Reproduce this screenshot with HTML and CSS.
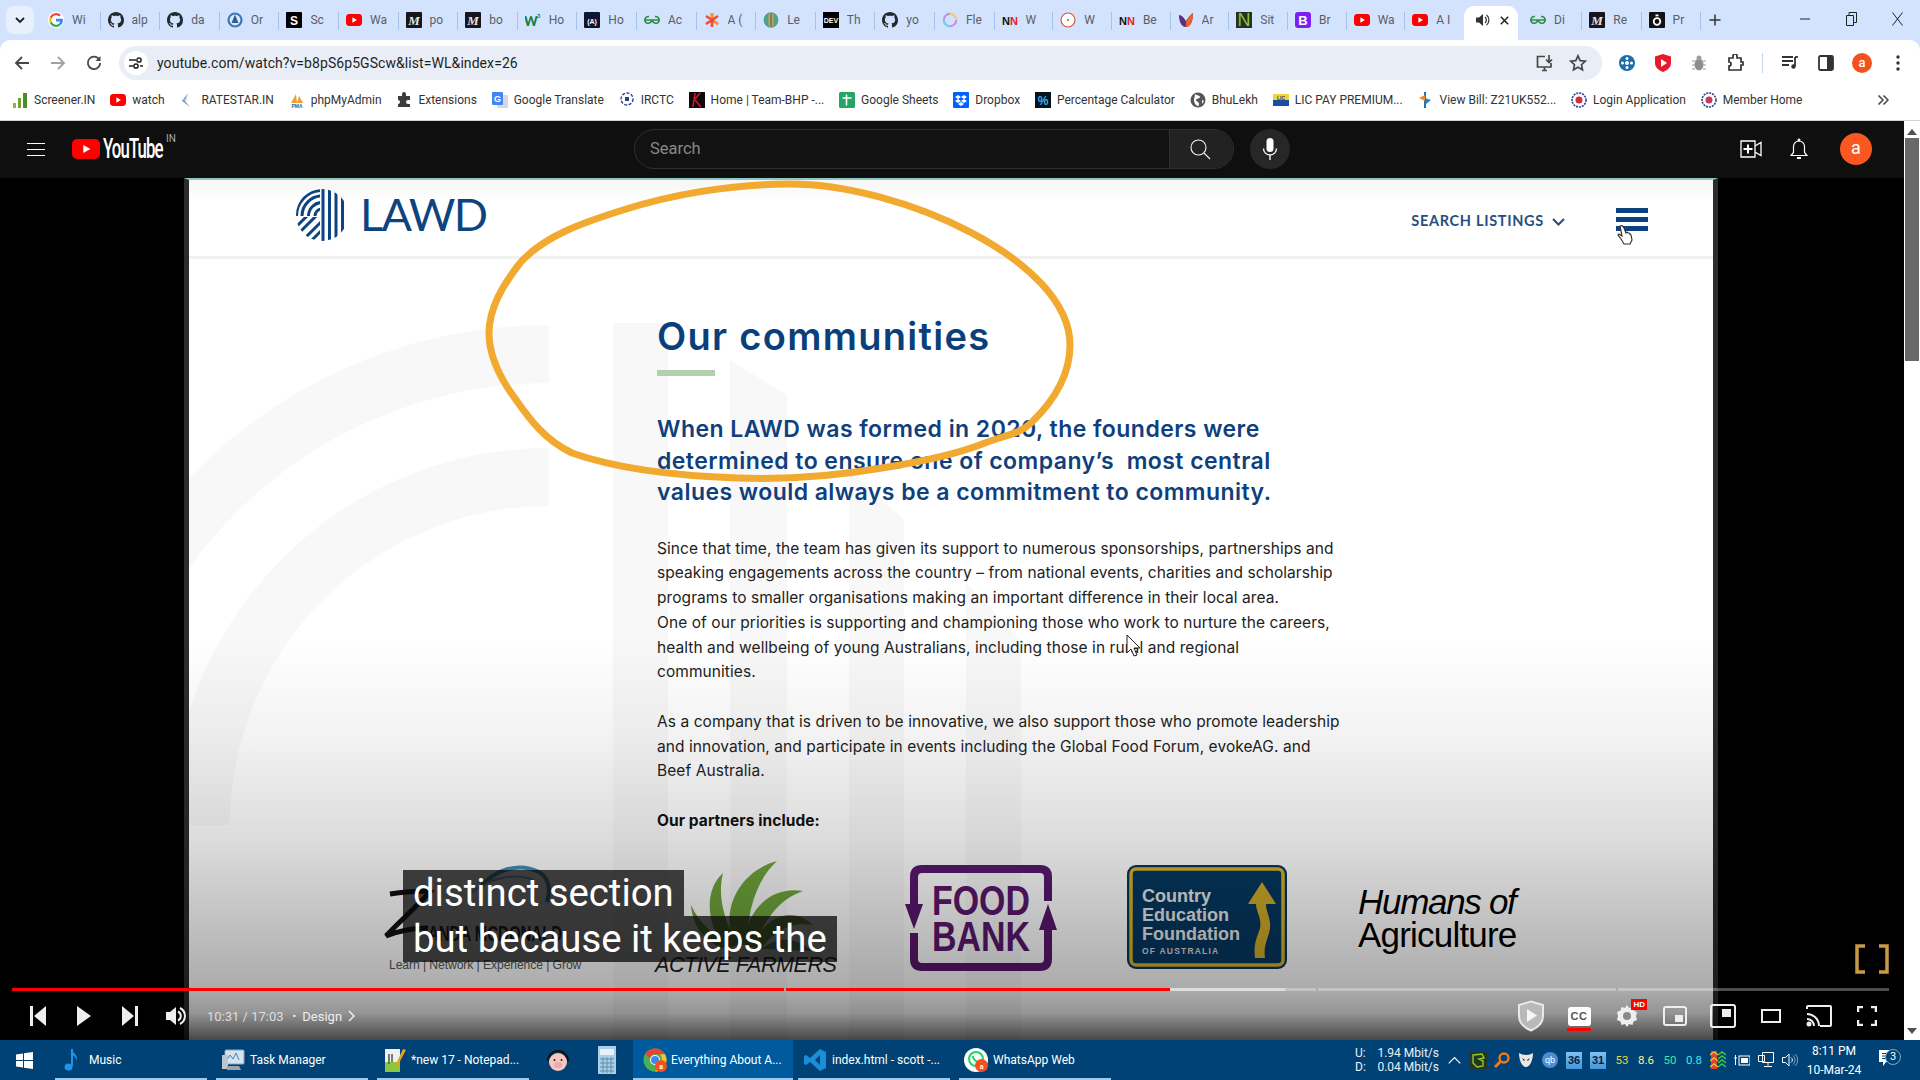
FILE: index.html
```html
<!DOCTYPE html>
<html lang="en">
<head>
<meta charset="utf-8">
<title>YouTube</title>
<link rel="stylesheet" href="styles.css">
</head>
<body>
<svg class="defs" width="0" height="0" aria-hidden="true">
  <symbol id="i-g" viewBox="0 0 16 16"><circle cx="8" cy="8" r="8" fill="#fff"/><path d="M8 3.2a4.8 4.8 0 0 1 3.3 1.3l1.6-1.6A7 7 0 0 0 1.8 5l1.9 1.4A4.6 4.6 0 0 1 8 3.2z" fill="#ea4335"/><path d="M3.7 9.6 1.8 11a7 7 0 0 0 11 2.1l-1.8-1.4A4.6 4.6 0 0 1 3.7 9.6z" fill="#34a853"/><path d="M1.8 5a7 7 0 0 0 0 6l1.9-1.4a4.6 4.6 0 0 1 0-3.2z" fill="#fbbc05"/><path d="M14.8 6.8H8v2.6h3.9a3.4 3.4 0 0 1-.9 2.3l1.8 1.4a7 7 0 0 0 2-6.3z" fill="#4285f4"/></symbol>
  <symbol id="i-gh" viewBox="0 0 16 16"><path fill="#24292f" d="M8 0C3.58 0 0 3.58 0 8c0 3.54 2.29 6.53 5.47 7.59.4.07.55-.17.55-.38 0-.19-.01-.82-.01-1.49-2.01.37-2.53-.49-2.69-.94-.09-.23-.48-.94-.82-1.13-.28-.15-.68-.52-.01-.53.63-.01 1.08.58 1.23.82.72 1.21 1.87.87 2.33.66.07-.52.28-.87.51-1.07-1.78-.2-3.64-.89-3.64-3.95 0-.87.31-1.59.82-2.15-.08-.2-.36-1.02.08-2.12 0 0 .67-.21 2.2.82.64-.18 1.32-.27 2-.27.68 0 1.36.09 2 .27 1.53-1.04 2.2-.82 2.2-.82.44 1.1.16 1.92.08 2.12.51.56.82 1.27.82 2.15 0 3.07-1.87 3.75-3.65 3.95.29.25.54.73.54 1.48 0 1.07-.01 1.93-.01 2.2 0 .21.15.46.55.38A8.013 8.013 0 0016 8c0-4.42-3.58-8-8-8z"/></symbol>
  <symbol id="i-yt" viewBox="0 0 16 16"><rect y="2" width="16" height="12" rx="3.4" fill="#f00"/><path d="M6.4 5.3 10.9 8l-4.5 2.7z" fill="#fff"/></symbol>
  <symbol id="i-m" viewBox="0 0 16 16"><rect width="16" height="16" rx="1" fill="#15151b"/><text x="8" y="12.5" text-anchor="middle" class="sv-m">M</text></symbol>
  <symbol id="i-gfg" viewBox="0 0 16 16"><path d="M1 8h14M5 4.6a3.4 3.4 0 1 0 2.6 3.4M11 4.6A3.4 3.4 0 1 1 8.4 8" fill="none" stroke="#2f8d46" stroke-width="1.6"/></symbol>
  <symbol id="i-nn" viewBox="0 0 16 16"><text x="0" y="13" class="sv-nn">N</text><text x="8" y="13" class="sv-nn sv-red">N</text></symbol>
  <symbol id="i-avatar" viewBox="0 0 20 20"><circle cx="10" cy="10" r="10" fill="#f4511e"/><text x="10" y="14" text-anchor="middle" class="sv-a">a</text></symbol>
</svg>

<div class="tabstrip">
  <div class="tabsearch"><svg width="10" height="7" viewBox="0 0 10 7"><path d="M1 1l4 4 4-4" fill="none" stroke="#1f1f1f" stroke-width="1.8"/></svg></div>
  <div class="tab"><svg class="fav"><use href="#i-g"/></svg><span>Wi</span></div>
  <div class="tab"><svg class="fav"><use href="#i-gh"/></svg><span>alp</span></div>
  <div class="tab"><svg class="fav"><use href="#i-gh"/></svg><span>da</span></div>
  <div class="tab"><svg class="fav" viewBox="0 0 16 16"><circle cx="8" cy="8" r="7.6" fill="#3d78b8"/><circle cx="8" cy="8" r="5.4" fill="#dfeaf6"/><path d="M8 2.5 11.5 11h-7z" fill="#2a5e9c"/></svg><span>Or</span></div>
  <div class="tab"><svg class="fav" viewBox="0 0 16 16"><rect width="16" height="16" rx="1" fill="#000"/><text x="8" y="12.6" text-anchor="middle" class="sv-s">S</text></svg><span>Sc</span></div>
  <div class="tab"><svg class="fav"><use href="#i-yt"/></svg><span>Wa</span></div>
  <div class="tab"><svg class="fav"><use href="#i-m"/></svg><span>po</span></div>
  <div class="tab"><svg class="fav"><use href="#i-m"/></svg><span>bo</span></div>
  <div class="tab"><svg class="fav" viewBox="0 0 16 16"><text x="-1" y="13.5" class="sv-w">W</text><text x="12" y="6" class="sv-w3">3</text></svg><span>Ho</span></div>
  <div class="tab"><svg class="fav" viewBox="0 0 16 16"><rect width="16" height="16" rx="1" fill="#0f1632"/><text x="8" y="12" text-anchor="middle" class="sv-ah">(A)</text></svg><span>Ho</span></div>
  <div class="tab"><svg class="fav"><use href="#i-gfg"/></svg><span>Ac</span></div>
  <div class="tab"><svg class="fav" viewBox="0 0 16 16"><path d="M8 1v14M2 4l12 8M14 4 2 12" stroke="#ef4c38" stroke-width="2.6"/><path d="M8 1v5M14 12l-4-3" stroke="#f59b1c" stroke-width="2.6"/></svg><span>A (</span></div>
  <div class="tab"><svg class="fav" viewBox="0 0 16 16"><ellipse cx="8" cy="8" rx="7.4" ry="7.8" fill="#4fa18a"/><rect x="5.4" y="1" width="5.2" height="14" rx="2.6" fill="#c3a05b"/><path d="M8 1v14" stroke="#3c5f55"/></svg><span>Le</span></div>
  <div class="tab"><svg class="fav" viewBox="0 0 16 16"><rect width="16" height="16" fill="#000"/><text x="8" y="11" text-anchor="middle" class="sv-dev">DEV</text></svg><span>Th</span></div>
  <div class="tab"><svg class="fav"><use href="#i-gh"/></svg><span>yo</span></div>
  <div class="tab"><svg class="fav" viewBox="0 0 16 16"><circle cx="8" cy="8" r="6.2" fill="none" stroke="#c58af0" stroke-width="2"/><path d="M8 1.8a6.2 6.2 0 0 1 6.2 6.2" fill="none" stroke="#f7d65c" stroke-width="2"/><path d="M1.8 8A6.2 6.2 0 0 0 8 14.2" fill="none" stroke="#6fd0ea" stroke-width="2"/></svg><span>Fle</span></div>
  <div class="tab"><svg class="fav"><use href="#i-nn"/></svg><span>W</span></div>
  <div class="tab"><svg class="fav" viewBox="0 0 16 16"><circle cx="8" cy="8" r="7" fill="#fff" stroke="#e0533c" stroke-width="1.2"/><circle cx="8" cy="8" r="1.1" fill="#e0533c"/></svg><span>W</span></div>
  <div class="tab"><svg class="fav"><use href="#i-nn"/></svg><span>Be</span></div>
  <div class="tab"><svg class="fav" viewBox="0 0 16 16"><path d="M1 3c3 0 5 3 7 6 2-3 4-6 7-8 0 7-2 14-7 14S1 9 1 3z" fill="#5c2d8c"/><path d="M8 9c2-3 4-6 7-8 0 7-2 14-7 14z" fill="#e8622a"/></svg><span>Ar</span></div>
  <div class="tab"><svg class="fav" viewBox="0 0 16 16"><rect width="16" height="16" fill="#26301f"/><text x="8" y="14" text-anchor="middle" class="sv-n">N</text></svg><span>Sit</span></div>
  <div class="tab"><svg class="fav" viewBox="0 0 16 16"><rect width="16" height="16" rx="3" fill="#7c1ff2"/><text x="8" y="13" text-anchor="middle" class="sv-b">B</text></svg><span>Br</span></div>
  <div class="tab"><svg class="fav"><use href="#i-yt"/></svg><span>Wa</span></div>
  <div class="tab tab-last"><svg class="fav"><use href="#i-yt"/></svg><span>A I</span></div>
  <div class="tab tab-active"><svg class="fav" viewBox="0 0 16 16"><path d="M2 5.5h3L9 2v12l-4-3.5H2z" fill="#333"/><path d="M11 5a4 4 0 0 1 0 6M12.6 3a6.6 6.6 0 0 1 0 10" fill="none" stroke="#333" stroke-width="1.2"/></svg><svg class="tabx" width="9" height="9" viewBox="0 0 9 9"><path d="M.8.8l7.4 7.4M8.2.8.8 8.2" stroke="#1f1f1f" stroke-width="1.5"/></svg></div>
  <div class="tab"><svg class="fav"><use href="#i-gfg"/></svg><span>Di</span></div>
  <div class="tab"><svg class="fav"><use href="#i-m"/></svg><span>Re</span></div>
  <div class="tab"><svg class="fav" viewBox="0 0 16 16"><rect width="16" height="16" rx="1" fill="#111"/><circle cx="8" cy="9.5" r="3.3" fill="none" stroke="#fff" stroke-width="1.8"/><rect x="6.5" y="2.5" width="3" height="1.8" fill="#fff"/></svg><span>Pr</span></div>
  <div class="newtab"><svg width="12" height="12" viewBox="0 0 12 12"><path d="M6 .5v11M.5 6h11" stroke="#333" stroke-width="1.5"/></svg></div>
  <div class="winbtns">
    <div class="winbtn"><svg width="10" height="10" viewBox="0 0 10 10"><path d="M0 5h10" stroke="#222"/></svg></div>
    <div class="winbtn"><svg width="11" height="14" viewBox="0 0 11 14"><path d="M.5 3.5h7v10h-7zM3 3.5V.5h7.5v10H7.5" fill="none" stroke="#222"/></svg></div>
    <div class="winbtn"><svg width="11" height="14" viewBox="0 0 11 14"><path d="M.5.5l10 13M10.500.5l-10 13" stroke="#222"/></svg></div>
  </div>
</div>

<div class="toolbar">
  <div class="tcell"><svg width="16" height="16" viewBox="0 0 16 16"><path d="M15 8H2M8 2 2 8l6 6" fill="none" stroke="#474747" stroke-width="1.8"/></svg></div>
  <div class="tcell"><svg width="16" height="16" viewBox="0 0 16 16"><path d="M1 8h13M8 2l6 6-6 6" fill="none" stroke="#a0a2a6" stroke-width="1.8"/></svg></div>
  <div class="tcell"><svg width="16" height="16" viewBox="0 0 16 16"><path d="M13.500 5A6.200 6.200 0 1 0 14.200 8" fill="none" stroke="#474747" stroke-width="1.7"/><path d="M14.500 1v5h-5z" fill="#474747"/></svg></div>
  <div class="omnibox">
    <div class="siteinfo"><svg width="14" height="14" viewBox="0 0 14 14"><path d="M0 4h7M11 10h3M0 10h4" stroke="#222" stroke-width="1.5"/><circle cx="10" cy="4" r="2.1" fill="none" stroke="#222" stroke-width="1.5"/><circle cx="7" cy="10" r="2.1" fill="none" stroke="#222" stroke-width="1.5"/></svg></div>
    <span class="url">youtube.com/watch?v=b8pS6p5GScw&amp;list=WL&amp;index=26</span>
    <div class="omni-right">
      <svg width="18" height="18" viewBox="0 0 18 18"><path d="M15 9v4H1.500V2.500H9M6 16.500h5M8.500 13v3.500" fill="none" stroke="#474747" stroke-width="1.7"/><path d="M13 1v7M10 5.500l3 3 3-3" fill="none" stroke="#474747" stroke-width="1.7"/></svg>
      <svg width="18" height="18" viewBox="0 0 18 18"><path d="M9 1.800l2.200 4.800 5.100.6-3.800 3.500 1 5.100L9 13.200l-4.500 2.600 1-5.100L1.700 7.200l5.100-.6z" fill="none" stroke="#474747" stroke-width="1.7"/></svg>
    </div>
  </div>
  <div class="tcell tcell-first"><svg width="16" height="16" viewBox="0 0 16 16"><circle cx="8" cy="8" r="8" fill="#1b6ea8"/><circle cx="8" cy="8" r="2" fill="#fff"/><circle cx="8" cy="3.5" r="1.5" fill="#fff"/><circle cx="8" cy="12.5" r="1.5" fill="#fff"/><circle cx="3.5" cy="8" r="1.5" fill="#fff"/><circle cx="12.5" cy="8" r="1.5" fill="#fff"/></svg></div>
  <div class="tcell"><svg width="16" height="18" viewBox="0 0 16 18"><path d="M8 0l8 2.500V9c0 4-3.500 7.500-8 9-4.500-1.500-8-5-8-9V2.500z" fill="#e8192c"/><path d="M6 5l6 4-6 4z" fill="#fff"/></svg></div>
  <div class="tcell"><svg width="14" height="18" viewBox="0 0 14 18"><ellipse cx="7" cy="10.5" rx="4.5" ry="6" fill="#8a8f8b"/><circle cx="7" cy="4" r="2.5" fill="#9a9e9b"/><path d="M0 7h3M11 7h3M0 11h3M11 11h3M0 15h3M11 15h3" stroke="#9a9e9b"/></svg></div>
  <div class="tcell"><svg width="18" height="18" viewBox="0 0 18 18"><path d="M3 4h4V2a2 2 0 0 1 4 0v2h4v4h2v3h-2v5H3v-4a2 2 0 0 0 0-4z" fill="none" stroke="#333" stroke-width="1.7"/></svg></div>
  <div class="tsep"><i></i></div>
  <div class="tcell"><svg width="18" height="16" viewBox="0 0 18 16"><path d="M1 2h11M1 6h11M1 10h7" stroke="#333" stroke-width="1.8"/><path d="M14 2v9" stroke="#333" stroke-width="1.8"/><circle cx="12.5" cy="11.5" r="2.2" fill="#333"/><path d="M14 2h3" stroke="#333" stroke-width="1.8"/></svg></div>
  <div class="tcell"><svg width="16" height="16" viewBox="0 0 16 16"><rect x="1" y="1" width="14" height="14" rx="1.5" fill="none" stroke="#333" stroke-width="1.8"/><rect x="9" y="1" width="6" height="14" fill="#333"/></svg></div>
  <div class="tcell"><svg width="20" height="20"><use href="#i-avatar"/></svg></div>
  <div class="tcell"><svg width="4" height="16" viewBox="0 0 4 16"><circle cx="2" cy="2" r="1.7" fill="#333"/><circle cx="2" cy="8" r="1.7" fill="#333"/><circle cx="2" cy="14" r="1.7" fill="#333"/></svg></div>
</div>

<div class="bookmarks">
  <a class="bm"><svg class="fav" viewBox="0 0 16 16"><path d="M1 11h3v5H1z" fill="#8ab83d"/><path d="M6 6h3v10H6z" fill="#6da52e"/><path d="M11 1h4v15h-4z" fill="#4b8e25"/></svg><span>Screener.IN</span></a>
  <a class="bm"><svg class="fav"><use href="#i-yt"/></svg><span>watch</span></a>
  <a class="bm"><svg class="fav" viewBox="0 0 16 16"><path d="M9 1 3 9l8 6-5-6z" fill="#7d9bb8"/><path d="M3 7l5 1" stroke="#c0ccd8"/></svg><span>RATESTAR.IN</span></a>
  <a class="bm"><svg class="fav" viewBox="0 0 16 16"><path d="M2 11 7 2l1 9zM8 11l2-7 4 7z" fill="#f0a030"/><text x="8" y="16" text-anchor="middle" class="sv-pma">PMA</text></svg><span>phpMyAdmin</span></a>
  <a class="bm"><svg class="fav" viewBox="0 0 16 16"><path d="M2 4h4V2a2 2 0 0 1 4 0v2h4v4h-2a2 2 0 0 0 0 4h2v3H2v-3a2 2 0 0 0 0-4z" fill="#3c3c3c"/></svg><span>Extensions</span></a>
  <a class="bm"><svg class="fav" viewBox="0 0 16 16"><rect x="5" y="3" width="11" height="13" rx="1" fill="#d8d8d8"/><rect width="11" height="13" rx="1" fill="#4285f4"/><text x="5.5" y="10" text-anchor="middle" class="sv-gt">G</text></svg><span>Google Translate</span></a>
  <a class="bm"><svg class="fav" viewBox="0 0 16 16"><circle cx="8" cy="7" r="6" fill="none" stroke="#27408b" stroke-width="1.4" stroke-dasharray="3 1.5"/><path d="M6 9V5h4v4z" fill="#27408b"/></svg><span>IRCTC</span></a>
  <a class="bm"><svg class="fav" viewBox="0 0 16 16"><rect width="16" height="16" fill="#0c0c0c"/><path d="M4 15 6 1M6 8l6 7M6 7l5-6" stroke="#d3172a" stroke-width="1.6"/></svg><span>Home | Team-BHP -...</span></a>
  <a class="bm"><svg class="fav" viewBox="0 0 16 16"><rect width="16" height="16" rx="1.5" fill="#23a566"/><path d="M3.500 6h9M7.500 2.500v11" stroke="#fff" stroke-width="1.5"/></svg><span>Google Sheets</span></a>
  <a class="bm"><svg class="fav" viewBox="0 0 16 16"><rect width="16" height="16" rx="1" fill="#0061ff"/><path d="M5 3 2 5l3 2 3-2zM11 3 8 5l3 2 3-2zM5 7 2 9l3 2 3-2zM11 7 8 9l3 2 3-2zM5 12l3 2 3-2-3-2z" fill="#fff"/></svg><span>Dropbox</span></a>
  <a class="bm"><svg class="fav" viewBox="0 0 16 16"><rect width="16" height="16" fill="#07121f"/><text x="8" y="13" text-anchor="middle" class="sv-pct">%</text></svg><span>Percentage Calculator</span></a>
  <a class="bm"><svg class="fav" viewBox="0 0 16 16"><circle cx="8" cy="8" r="7.5" fill="#555"/><path d="M5 2c2 2 5 1 5 3S6 6 6 8s3 1 3 4-2 2-3 1-2-3-2-5 1-4 1-6zM12 8l2 1-2 3z" fill="#fff"/></svg><span>BhuLekh</span></a>
  <a class="bm"><svg class="fav" viewBox="0 0 16 16"><rect y="2" width="16" height="12" fill="#f3d33a"/><rect y="8" width="16" height="6" fill="#1a4fa0"/><text x="8" y="8" text-anchor="middle" class="sv-lic">LIC</text></svg><span>LIC PAY PREMIUM...</span></a>
  <a class="bm"><svg class="fav" viewBox="0 0 16 16"><path d="M8 0v16" stroke="#1f6fb5" stroke-width="2"/><path d="M2 6l6-3v6z" fill="#f08a24"/><path d="M14 8 8 6v7z" fill="#2a83c9"/></svg><span>View Bill: Z21UK552...</span></a>
  <a class="bm"><svg class="fav" viewBox="0 0 16 16"><circle cx="8" cy="8" r="7" fill="#fff" stroke="#25408f" stroke-width="1.6" stroke-dasharray="2 1"/><circle cx="8" cy="8" r="3.5" fill="#d62a3c"/></svg><span>Login Application</span></a>
  <a class="bm"><svg class="fav" viewBox="0 0 16 16"><circle cx="8" cy="8" r="7" fill="#fff" stroke="#25408f" stroke-width="1.6" stroke-dasharray="2 1"/><circle cx="8" cy="8" r="3.5" fill="#c93a58"/></svg><span>Member Home</span></a>
  <div class="bm-more"><svg width="12" height="12" viewBox="0 0 12 12"><path d="M1.500 1.500 6 6l-4.500 4.500M6.500 1.500 11 6l-4.500 4.500" fill="none" stroke="#444" stroke-width="1.5"/></svg></div>
</div>

<div class="content">
  <div class="main">
    <header class="ythead">
      <div class="yt-left">
        <div class="yt-menu"><i></i><i></i><i></i></div>
        <svg class="yt-icon" width="28" height="20" viewBox="0 0 28 20"><rect width="28" height="20" rx="5" fill="#f00"/><path d="M11.3 6 18.500 10l-7.200 4z" fill="#fff"/></svg>
        <span class="yt-word">YouTube</span><sup class="yt-in">IN</sup>
      </div>
      <div class="yt-search">
        <div class="yt-input">Search</div>
        <div class="yt-sbtn"><svg width="22" height="22" viewBox="0 0 22 22"><circle cx="9.5" cy="9.5" r="7.5" fill="none" stroke="#f1f1f1" stroke-width="1.1"/><path d="M15 15l6 6" stroke="#f1f1f1" stroke-width="1.1"/></svg></div>
      </div>
      <div class="yt-mic"><svg width="16" height="24" viewBox="0 0 16 24"><rect x="4.5" y="1" width="7" height="14" rx="3.5" fill="#fff"/><path d="M1.500 11.500a6.500 6.500 0 0 0 13 0M8 18v5" fill="none" stroke="#fff" stroke-width="1.3"/></svg></div>
      <div class="yt-right">
        <div class="yt-cell"><svg width="22" height="18" viewBox="0 0 22 18"><path d="M1 1h14v16H1zM15 6l6-3.500v13L15 12" fill="none" stroke="#fff" stroke-width="1.3"/><path d="M8 4.500v9M3.500 9h9" stroke="#fff" stroke-width="2"/></svg></div>
        <div class="yt-cell"><svg width="18" height="22" viewBox="0 0 18 22"><path d="M1 17.500h16l-2.500-3V8.500a5.500 5.500 0 0 0-11 0v6z" fill="none" stroke="#fff" stroke-width="1.2"/><path d="M7 20h4" stroke="#fff" stroke-width="2"/><circle cx="9" cy="2" r="1.5" fill="#fff"/></svg></div>
        <div class="yt-avatar">a</div>
      </div>
    </header>

    <section class="video">
      <div class="slide">
        <svg class="watermark" viewBox="189 178 1524 862" preserveAspectRatio="none" aria-hidden="true">
          <g fill="none" stroke="#f8f8f9" stroke-width="58">
            <path d="M549 354A471 471 0 0 0 78 825"/>
            <path d="M549 477A348 348 0 0 0 201 825"/>
          </g>
          <path d="M613 323h55v717h-55zM730 360l57 35v645h-57zM849 470l55 50v520h-55zM966 583l55 57v400h-55z" fill="#f8f8f9"/>
        </svg>
        <div class="sl-head">
          <div class="lawd">
            <svg class="lawd-mark" width="52" height="52" viewBox="0 0 52 52">
              <defs><clipPath id="lw"><circle cx="26" cy="26" r="26"/></clipPath><clipPath id="lwtl"><rect width="24" height="27"/></clipPath><clipPath id="lwbl"><rect y="28" width="24" height="24"/></clipPath></defs>
              <g clip-path="url(#lw)">
                <path d="M25.500 0h3v52h-3zM32 0h3v52h-3zM38.500 0h3v52h-3zM45 0h3v52h-3z" fill="#0d4480"/>
                <g clip-path="url(#lwtl)" fill="none" stroke="#0d4480" stroke-width="3"><circle cx="26" cy="27" r="7"/><circle cx="26" cy="27" r="13.5"/><circle cx="26" cy="27" r="20"/><circle cx="26" cy="27" r="25.5"/></g>
                <g clip-path="url(#lwbl)" stroke="#0d4480" stroke-width="3"><path d="M-2 40 12 26M-2 49 24 23M2 56 28 30M11 56 28 39"/></g>
              </g>
            </svg>
            <span class="lawd-word">LAWD</span>
          </div>
          <div class="sl-nav">SEARCH LISTINGS <svg width="13" height="8" viewBox="0 0 13 8"><path d="M1 1l5.500 5.500L12 1" fill="none" stroke="#264f7f" stroke-width="2"/></svg></div>
          <div class="sl-burger"><i></i><i></i><i></i></div>
        </div>
        <div class="sl-main">
          <h1 class="sl-title">Our communities</h1>
          <div class="sl-rule"></div>
          <p class="sl-lead">When LAWD was formed in 2020, the founders were<br>determined to ensure one of company’s&nbsp; most central<br>values would always be a commitment to community.</p>
          <p class="sl-body">Since that time, the team has given its support to numerous sponsorships, partnerships and<br>speaking engagements across the country – from national events, charities and scholarship<br>programs to smaller organisations making an important difference in their local area.<br>One of our priorities is supporting and championing those who work to nurture the careers,<br>health and wellbeing of young Australians, including those in rural and regional<br>communities.</p>
          <p class="sl-body">As a company that is driven to be innovative, we also support those who promote leadership<br>and innovation, and participate in events including the Global Food Forum, evokeAG. and<br>Beef Australia.</p>
          <p class="sl-body sl-strong">Our partners include:</p>
        </div>
        <div class="logos">
          <div class="lg-zanda">
            <svg class="zanda-art" width="205" height="90" viewBox="0 0 205 90"><path d="M95 25C110 5 135-2 155 8c10 6 12 18 8 30" fill="none" stroke="#3f8fb8" stroke-width="4"/><path d="M85 30C105 14 130 8 150 16" fill="none" stroke="#7fb8d8" stroke-width="2"/><path d="M6 30C20 28 35 26 46 28 30 45 15 58 2 72c15-6 30-8 42-8" fill="none" stroke="#111" stroke-width="5"/></svg>
            <div class="zanda-name">ANDA MCDONALD</div>
            <div class="zanda-sub">Learn | Network | Experience | Grow</div>
          </div>
          <div class="lg-af">
            <svg class="af-art" width="122" height="90" viewBox="0 0 122 90"><g fill="#6fa53a"><path d="M34 88C14 60 14 28 32 12 26 36 34 60 46 84z"/><path d="M44 84C28 50 48 10 86 0 66 18 56 50 56 84z"/><path d="M54 86C52 58 74 24 112 30 88 38 72 60 64 86z"/><path d="M62 86C70 60 98 42 122 64 98 60 82 72 70 88z"/><path d="M30 88C16 78 2 70 0 44 8 62 22 72 36 84z"/></g><path d="M70 88c18-14 36-12 50 2z" fill="#46721f" opacity=".7"/></svg>
            <div class="af-name">ACTIVE FARMERS</div>
          </div>
          <svg class="lg-fb" width="152" height="110" viewBox="0 0 152 110">
            <path d="M9 41V14Q9 6 17 6h118q8 0 8 8v24M9 70v26q0 8 8 8h118q8 0 8-8V67" fill="none" stroke="#59186c" stroke-width="8"/>
            <path d="M0 41h18l-9 25zM134 67h18l-9-26z" fill="#59186c"/>
            <text x="76" y="52" text-anchor="middle" class="fb-t" textLength="98" lengthAdjust="spacingAndGlyphs">FOOD</text>
            <text x="76" y="88" text-anchor="middle" class="fb-t" textLength="98" lengthAdjust="spacingAndGlyphs">BANK</text>
          </svg>
          <svg class="lg-cef" width="162" height="106" viewBox="0 0 162 106">
            <rect x="1" y="1" width="160" height="104" rx="9" fill="#04375f"/>
            <rect x="5" y="5" width="152" height="96" rx="5" fill="none" stroke="#d9b128" stroke-width="3.5"/>
            <path d="M136 18l-14 22h8c0 8 6 14 4 24-2 8-7 14-5 30h10c-2-14 4-20 5-30 1-10-4-16-4-24h10z" fill="#d0aa2a"/>
            <text x="16" y="38" class="cef-t">Country</text>
            <text x="16" y="57" class="cef-t">Education</text>
            <text x="16" y="76" class="cef-t">Foundation</text>
            <text x="16" y="90" class="cef-s">OF AUSTRALIA</text>
          </svg>
          <div class="lg-hoa"><span class="hoa-1">Humans of</span><span class="hoa-2">Agriculture</span></div>
        </div>
        <svg class="annot" viewBox="189 178 1524 862" aria-hidden="true">
          <path d="M790 184C900 184 1070 260 1070 345C1070 375 1055 400 1031 423C1018 435 1005 435 985 443C955 455 920 462 882 468C835 476 790 480 738 478C680 476 620 470 572 453C545 440 530 420 514 397C498 375 489 355 489 333C489 308 503 285 520 263C545 235 585 222 623 210C670 195 730 184 790 184Z" fill="none" stroke="#f2a930" stroke-width="7"/>
          <path d="M1127 635v18l4-4 3 7 3-1-3-7h6z" fill="#fff" stroke="#222" stroke-width="1"/>
          <path d="M1620 226c2-1 3 0 4 2l2 5 1-1 1 1 1 0 1 1 1 1 1 5-2 4h-6l-3-5-3-4 1-1 3 2z" fill="#fff" stroke="#333" stroke-width="1.2"/>
        </svg>
      </div>
      <div class="vshade"></div>
      <svg class="brackets" width="34" height="30" viewBox="0 0 34 30" aria-hidden="true"><path d="M10 2H2v26h8M24 2h8v26h-8" fill="none" stroke="#c99a45" stroke-width="3.5"/></svg>
      <div class="caption"><span class="cap-line">distinct section</span><span class="cap-line">but because it keeps the</span></div>
      <div class="controls">
        <div class="progress">
          <div class="seg s1"></div><div class="seg s2"><i class="played"></i><i class="buffered"></i></div><div class="seg s3"></div><div class="seg s4"></div>
        </div>
        <div class="ctl-row">
          <div class="ctl ctl-s"><svg width="16" height="20" viewBox="0 0 16 20"><path d="M0 0h3v20H0zM16 0v20L4 10z" fill="#eee"/></svg></div>
          <div class="ctl ctl-s ctl-play"><svg width="14" height="20" viewBox="0 0 14 20"><path d="M0 0l14 10L0 20z" fill="#eee"/></svg></div>
          <div class="ctl ctl-s"><svg width="16" height="20" viewBox="0 0 16 20"><path d="M13 0h3v20h-3zM0 0v20l12-10z" fill="#eee"/></svg></div>
          <div class="ctl ctl-s"><svg width="20" height="20" viewBox="0 0 20 20"><path d="M0 6h4l6-5v18l-6-5H0z" fill="#eee"/><path d="M12 5.500a5 5 0 0 1 0 9M14 2a9 9 0 0 1 0 16" fill="none" stroke="#eee" stroke-width="2"/></svg></div>
          <div class="ctl-time">10:31 / 17:03</div>
          <div class="ctl-chap"><span class="dot">•</span> Design <svg width="7" height="12" viewBox="0 0 7 12"><path d="M1 1l5 5-5 5" fill="none" stroke="#eee" stroke-width="1.5"/></svg></div>
          <div class="ctl-right">
            <div class="ctl"><svg width="28" height="32" viewBox="0 0 28 32"><path d="M14 1.500 26 5v11c0 7-6 12-12 14.500C8 28 2 23 2 16V5z" fill="#b9b9b9" stroke="#e8e8e8" stroke-width="2"/><path d="M10 9l10 6.500L10 22z" fill="#f5f5f5"/></svg></div>
            <div class="ctl"><div class="cc">CC</div></div>
            <div class="ctl ctl-gear"><svg width="22" height="22" viewBox="0 0 22 22"><path d="M11 0l2 3 3.500-1 1 3.500L21 7l-1 4 1 4-3.500 1.500-1 3.500-3.500-1-2 3-2-3-3.500 1-1-3.500L1 15l1-4-1-4 3.500-1.500 1-3.500L9 3z" fill="#eee"/><circle cx="11" cy="11" r="4" fill="#8a8a8a"/></svg><span class="hd">HD</span></div>
            <div class="ctl"><svg width="24" height="20" viewBox="0 0 24 20"><rect x="1" y="1" width="22" height="18" rx="2" fill="none" stroke="#eee" stroke-width="2"/><rect x="12" y="9" width="8" height="7" fill="#eee"/></svg></div>
            <div class="ctl"><svg width="26" height="24" viewBox="0 0 26 24"><rect x="1" y="1" width="24" height="22" rx="2" fill="none" stroke="#eee" stroke-width="2"/><rect x="12" y="5" width="9" height="8" fill="#eee"/></svg></div>
            <div class="ctl"><svg width="20" height="14" viewBox="0 0 20 14"><rect x="1" y="1" width="18" height="12" fill="none" stroke="#eee" stroke-width="2"/></svg></div>
            <div class="ctl"><svg width="26" height="22" viewBox="0 0 26 22"><path d="M1 4V2a1 1 0 0 1 1-1h22a1 1 0 0 1 1 1v18a1 1 0 0 1-1 1H14" fill="none" stroke="#eee" stroke-width="2"/><path d="M1 9a12 12 0 0 1 12 12M1 14a7 7 0 0 1 7 7" fill="none" stroke="#eee" stroke-width="2"/><circle cx="3" cy="19" r="2.5" fill="#eee"/></svg></div>
            <div class="ctl"><svg width="20" height="20" viewBox="0 0 20 20"><path d="M1 6V1h5M14 1h5v5M19 14v5h-5M6 19H1v-5" fill="none" stroke="#eee" stroke-width="2.5"/></svg></div>
          </div>
        </div>
      </div>
    </section>
  </div>
  <aside class="vscroll">
    <svg class="sc-arrow" width="10" height="6" viewBox="0 0 10 6"><path d="M0 6l5-6 5 6z" fill="#505050"/></svg>
    <div class="sc-thumb"></div>
    <svg class="sc-arrow sc-down" width="10" height="6" viewBox="0 0 10 6"><path d="M0 0l5 6 5-6z" fill="#505050"/></svg>
  </aside>
</div>

<footer class="taskbar">
  <div class="startbtn"><svg width="17" height="17" viewBox="0 0 17 17"><path d="M0 2.500 7 1.500V8H0zM8 1.300 17 0v8H8zM0 9h7v6.500L0 14.500zM8 9h9v8l-9-1.300z" fill="#fff"/></svg></div>
  <div class="tk"><svg class="tki" viewBox="0 0 24 24"><path d="M12 1v17" stroke="#1e96e8" stroke-width="2"/><ellipse cx="8.5" cy="19" rx="4" ry="3.5" fill="#1e96e8"/><path d="M12 1c1 5 6 5 5 12-1-4-3-5-5-6z" fill="#1e96e8"/></svg><span>Music</span></div>
  <div class="tk"><svg class="tki" viewBox="0 0 24 24"><rect x="4" y="2" width="19" height="14" rx="1" fill="#d7e3ef" stroke="#8fa6bb"/><path d="M6 12l3-5 3 4 3-6 3 7" fill="none" stroke="#3e84c7"/><path d="M1 7h6v14H1z" fill="#bcc6cf"/><path d="M6 18h12l2 4H6z" fill="#9aa6b0"/></svg><span>Task Manager</span></div>
  <div class="tk"><svg class="tki" viewBox="0 0 24 24"><path d="M3 1h15v23H3z" fill="#eef2ea"/><path d="M3 14h15v10H3z" fill="#8cc63f"/><path d="M7 6v10M10 6v8" stroke="#555" stroke-width="1.5"/><path d="M21 1l3 1-8 15-3 1z" fill="#e8a020"/></svg><span>*new 17 - Notepad...</span></div>
  <div class="tk-icon tk-pig"><svg width="24" height="24" viewBox="0 0 24 24"><path d="M2 13a10 10 0 0 1 20 0" fill="none" stroke="#111" stroke-width="2"/><circle cx="12" cy="14" r="9" fill="#f6c6c2"/><ellipse cx="12" cy="17" rx="4" ry="3" fill="#eda9a5"/><circle cx="8.5" cy="12" r="1" fill="#222"/><circle cx="15.5" cy="12" r="1" fill="#222"/></svg></div>
  <div class="tk-icon tk-calc"><svg width="18" height="28" viewBox="0 0 18 28"><rect width="18" height="28" fill="#a8cfe6"/><rect x="2" y="3" width="14" height="6" fill="#e6f1f8"/><path d="M2 13h14M2 17h14M2 21h14M2 25h14M5 11v16M9 11v16M13 11v16" stroke="#5f8fb0"/></svg></div>
  <div class="tk tk-active"><svg class="tki" viewBox="0 0 24 24"><circle cx="12" cy="12" r="11.500" fill="#4caf50"/><path d="M12 .5a11.500 11.500 0 0 1 10 5.800H12a5.800 5.800 0 0 0-5.600 4L2.500 5.500A11.500 11.500 0 0 1 12 .5z" fill="#ea4335"/><path d="M22 6.300a11.500 11.500 0 0 1-10 17.200l5-8.500a5.800 5.800 0 0 0 0-8.700z" fill="#fbc02d"/><circle cx="12" cy="12" r="5" fill="#fff"/><circle cx="12" cy="12" r="4" fill="#4285f4"/><circle cx="18" cy="18" r="6" fill="#f4511e"/><text x="18" y="21" text-anchor="middle" class="sv-ab">a</text></svg><span>Everything About A...</span></div>
  <div class="tk tk-vs"><svg class="tki" viewBox="0 0 24 24"><path d="M17 1l6 3v16l-6 3L7 14l-4 3-2-1V8l2-1 4 3zm0 6-5 5 5 5z" fill="#1a8fd8"/></svg><span>index.html - scott -...</span></div>
  <div class="tk tk-wa"><svg class="tki" viewBox="0 0 24 24"><circle cx="12" cy="12" r="12" fill="#fff"/><circle cx="12" cy="11" r="7" fill="none" stroke="#25d366" stroke-width="2"/><path d="M9 8c0 3 3 6 6 6" fill="none" stroke="#25d366" stroke-width="2"/><circle cx="17.5" cy="17.5" r="6.5" fill="#f4511e"/><text x="17.5" y="20.5" text-anchor="middle" class="sv-ab">a</text></svg><span>WhatsApp Web</span></div>
  <div class="tray">
    <div class="netmeter"><div class="nm-row"><span>U:</span><span>1.94 Mbit/s</span></div><div class="nm-row"><span>D:</span><span>0.04 Mbit/s</span></div></div>
    <div class="tc"><svg width="13" height="8" viewBox="0 0 13 8"><path d="M.7 7.300 6.500 1.500l5.800 5.800" fill="none" stroke="#fff" stroke-width="1.2"/></svg></div>
    <div class="tc"><svg width="17" height="17" viewBox="0 0 17 17"><rect width="17" height="17" fill="#26352a"/><path d="M3 3l9-1 2 4-5 1 4 2 0 5-6 1-4-4z" fill="none" stroke="#90d020" stroke-width="1.4"/></svg></div>
    <div class="tc"><svg width="16" height="16" viewBox="0 0 16 16"><circle cx="10" cy="6" r="4.5" fill="none" stroke="#f07a14" stroke-width="2.4"/><path d="M6.500 9.500 1 15" stroke="#f07a14" stroke-width="3"/></svg></div>
    <div class="tc"><svg width="16" height="16" viewBox="0 0 16 16"><path d="M1 1c2 1 4 2 7 2s5-1 7-2c0 7-3 14-7 14S1 8 1 1z" fill="#e8e8e8"/><path d="M4 6l3 2-1 1zM12 6 9 8l1 1z" fill="#111"/></svg></div>
    <div class="tc"><svg width="16" height="16" viewBox="0 0 16 16"><circle cx="8" cy="8" r="8" fill="#4d8bd6"/><text x="8" y="11" text-anchor="middle" class="sv-qb">qb</text></svg></div>
    <div class="tc"><span class="tbox">36</span></div>
    <div class="tc"><span class="tbox">31</span></div>
    <div class="tc tn tn-y">53</div>
    <div class="tc tn tn-l">8.6</div>
    <div class="tc tn tn-g">50</div>
    <div class="tc tn tn-c">0.8</div>
    <div class="tc"><svg width="16" height="18" viewBox="0 0 16 18"><rect x="1" y="0" width="6" height="18" fill="#d8453a"/><path d="M8 16l4-3 4 3M8 12l4-3 4 3M8 8l4-3 4 3M8 4l4-3 4 3" fill="none" stroke="#41c83a" stroke-width="1.5"/><path d="M0 16l4-3 4 3M0 10l4-3 4 3M0 4l4-3 4 3" fill="none" stroke="#f4b52e" stroke-width="1.5"/></svg></div>
    <div class="tc"><svg width="16" height="12" viewBox="0 0 16 12"><rect x="5" y="2" width="11" height="9" fill="none" stroke="#fff"/><rect x="7" y="4" width="7" height="5" fill="#fff"/><path d="M0 4h3M1.500 1v10" stroke="#fff"/></svg></div>
    <div class="tc"><svg width="16" height="16" viewBox="0 0 16 16"><path d="M4.500.5h11v10h-11zM.5 3.500h6v6h-6zM10 10.500v3M6 14.500h8" fill="none" stroke="#fff"/></svg></div>
    <div class="tc"><svg width="16" height="14" viewBox="0 0 16 14"><path d="M.5 4.500h3L7 1v12L3.500 9.500h-3z" fill="none" stroke="#fff"/><path d="M9 4.500a3 3 0 0 1 0 5" fill="none" stroke="#fff"/><path d="M11 2.500a6 6 0 0 1 0 9M13 1a8 8 0 0 1 0 12" fill="none" stroke="#7ca7c7"/></svg></div>
    <div class="clock"><span>8:11 PM</span><span>10-Mar-24</span></div>
    <div class="notif"><svg width="17" height="17" viewBox="0 0 17 17"><path d="M0 0h17v12H7l-3 4v-4H0z" fill="#fff"/><path d="M3 3.500h11M3 6h11M3 8.500h7" stroke="#004275"/></svg><span class="notif-n">3</span></div>
  </div>
</footer>
</body>
</html>
```

FILE: styles.css
```css
* { box-sizing: border-box; }
html, body { margin: 0; padding: 0; }
body {
  width: 1920px; height: 1080px; overflow: hidden;
  display: flex; flex-direction: column;
  background: #d3e3fd;
  font-family: Roboto, "Liberation Sans", sans-serif;
  color: #1f1f1f;
}
.defs { position: absolute; }
svg { display: block; flex: none; }
.fav { width: 16px; height: 16px; flex: none; }

/* svg text */
.sv-m { font: italic 700 13px "Liberation Serif", serif; fill: #e4e4e4; }
.sv-s { font: 700 12px "Liberation Sans", sans-serif; fill: #fff; }
.sv-w { font: 900 13px Lato, sans-serif; fill: #15803d; }
.sv-w3 { font: 700 6px Lato, sans-serif; fill: #15803d; }
.sv-ah { font: 700 7px "Liberation Sans", sans-serif; fill: #fff; }
.sv-dev { font: 700 7px "Liberation Sans", sans-serif; fill: #fff; }
.sv-nn { font: 900 11px "Liberation Sans", sans-serif; fill: #111; }
.sv-red { fill: #e3221c; }
.sv-n { font: 400 18px "Liberation Sans", sans-serif; fill: #8bc23c; }
.sv-b { font: 700 13px "Liberation Sans", sans-serif; fill: #fff; }
.sv-a { font: 500 13px Roboto, sans-serif; fill: #fff; }
.sv-ab { font: 700 7px Roboto, sans-serif; fill: #fff; }
.sv-pma { font: 700 5px "Liberation Sans", sans-serif; fill: #3a5a8c; }
.sv-gt { font: 700 9px "Liberation Sans", sans-serif; fill: #fff; }
.sv-pct { font: 700 12px "Liberation Sans", sans-serif; fill: #3db4e6; }
.sv-lic { font: 700 5px "Liberation Sans", sans-serif; fill: #14408a; }
.sv-qb { font: 400 9px "Liberation Sans", sans-serif; fill: #fff; }

/* tab strip */
.tabstrip { height: 40px; flex: none; display: flex; align-items: flex-end; background: #d3e3fd; }
.tabsearch {
  width: 28px; height: 28px; margin: 0 7px 6px 6px; border-radius: 8px; background: #e8f0fe;
  display: flex; align-items: center; justify-content: center; flex: none;
}
.tab {
  width: 59.6px; height: 34px; flex: none; padding: 0 0 6px 7px;
  display: flex; align-items: center; gap: 8px; overflow: hidden; position: relative;
  font-size: 12px; color: #45474a; white-space: nowrap;
}
.tab:nth-child(n+18) { width: 58.7px; }
.tab span { width: 20px; overflow: hidden; opacity: .85; }
.tab::after { content: ""; position: absolute; right: 0; top: 6px; height: 18px; width: 1px; background: #a6c2ea; }
.tab-last::after { display: none; }
.tab:nth-child(n+18).tab-active { background: #fff; border-radius: 10px 10px 0 0; width: 54px; margin-right: 5px; gap: 10px; padding-left: 10px; }
.tab-active::after { display: none; }
.tab-active ~ .tab:nth-child(n+18) { width: 59.3px; }
.tabx { flex: none; }
.newtab { width: 28px; height: 28px; margin-bottom: 6px; display: flex; align-items: center; justify-content: center; flex: none; margin-left: 0; }
.winbtns { margin-left: auto; display: flex; height: 34px; align-self: flex-start; }
.winbtn { width: 46px; display: flex; align-items: center; justify-content: center; padding-top: 4px; }

/* toolbar */
.toolbar {
  height: 40px; flex: none; background: #fff; border-radius: 10px 10px 0 0;
  display: flex; align-items: center; padding-left: 4px; padding-top: 6px;
}
.tcell { width: 36px; height: 34px; display: flex; align-items: center; justify-content: center; flex: none; }
.tcell-first { margin-left: 7px; }
.tsep { width: 19px; display: flex; justify-content: center; flex: none; }
.tsep i { display: block; width: 1px; height: 20px; background: #c7d7ef; }
.omnibox {
  width: 1483px; height: 34px; margin-left: 7px; border-radius: 17px; background: #e9eef6;
  display: flex; align-items: center; padding: 0 15px 0 5px; flex: none;
}
.siteinfo { width: 24px; height: 24px; border-radius: 50%; background: #fff; display: flex; align-items: center; justify-content: center; flex: none; }
.url { margin-left: 9px; font-size: 14px; color: #1f1f1f; white-space: nowrap; letter-spacing: .005em; }
.omni-right { margin-left: auto; display: flex; gap: 15px; align-items: center; padding-right: 0; }

/* bookmarks */
.bookmarks {
  height: 41px; flex: none; background: #fff; border-bottom: 1px solid #d4d4d4;
  display: flex; align-items: center; gap: 14.8px; padding-left: 12px;
}
.bm { display: flex; align-items: center; gap: 6px; font-size: 12px; color: #333; white-space: nowrap; flex: none; }
.bm-more { margin-left: auto; width: 43px; display: flex; justify-content: flex-start; }

/* content */
.content { flex: 1; min-height: 0; display: flex; }
.main { width: 1904px; flex: none; display: flex; flex-direction: column; }
.vscroll { width: 16px; flex: none; background: #fff; display: flex; flex-direction: column; align-items: center; padding: 8px 0 6px; }
.sc-arrow { flex: none; }
.sc-thumb { width: 14px; height: 223px; margin-top: 3px; background: #686868; }
.sc-down { margin-top: auto; }

/* youtube header */
.ythead { height: 57px; flex: none; background: #0f0f0f; display: flex; align-items: center; padding-bottom: 1px; }
.yt-left { width: 634px; flex: none; display: flex; align-items: center; height: 100%; padding-left: 27px; }
.yt-menu { width: 18px; display: flex; flex-direction: column; gap: 5px; flex: none; }
.yt-menu i { display: block; height: 1px; background: #fff; }
.yt-icon { margin-left: 27px; }
.yt-word {
  display: inline-block; margin-left: 3px; width: 60px; flex: none;
  font: 500 28px/1 Roboto, sans-serif; color: #fff; letter-spacing: -1.5px;
  transform: scaleX(.6); transform-origin: left center; white-space: nowrap; overflow: visible;
}
.yt-in { font-size: 10px; color: #aaa; margin: -20px 0 0 3px; line-height: 1; }
.yt-search { width: 600px; height: 40px; flex: none; display: flex; border: 1px solid #303030; border-radius: 20px; overflow: hidden; background: #121212; }
.yt-input { flex: 1; padding-left: 15px; font-size: 16.5px; line-height: 38px; color: #888; }
.yt-sbtn { width: 64px; flex: none; background: #222; border-left: 1px solid #303030; display: flex; align-items: center; justify-content: center; padding-right: 4px; }
.yt-mic { width: 40px; height: 40px; margin-left: 16px; border-radius: 50%; background: #272727; display: flex; align-items: center; justify-content: center; flex: none; }
.yt-right { margin-left: auto; display: flex; align-items: center; padding-right: 32px; }
.yt-cell { width: 48px; display: flex; justify-content: center; }
.yt-avatar { width: 32px; height: 32px; margin-left: 17px; border-radius: 50%; background: #fb5720; color: #fff; text-align: center; font-size: 18px; line-height: 30px; }

/* video */
.video { flex: 1; min-height: 0; position: relative; background: #000; padding-left: 184px; overflow: hidden; }
.slide {
  width: 1534px; height: 100%; position: relative; overflow: hidden; background: #fff;
  border-left: 5px solid #2c2c2c; border-right: 5px solid #2c2c2c; border-top: 2px solid #8fc7c4;
  display: flex; flex-direction: column;
  font-family: Inter, "Noto Sans", sans-serif;
}
.watermark { position: absolute; left: 0; top: -2px; width: 1524px; height: 862px; }
.annot { position: absolute; left: 0; top: -2px; width: 1524px; height: 862px; }
.vshade {
  position: absolute; inset: 0; pointer-events: none;
  background: linear-gradient(to bottom,
    rgba(0,0,0,0) 0, rgba(0,0,0,0) 460px, rgba(0,0,0,.05) 560px, rgba(0,0,0,.14) 665px,
    rgba(0,0,0,.33) 812px, rgba(0,0,0,.42) 835px, rgba(0,0,0,.72) 862px);
}
.sl-head {
  height: 79px; flex: none; position: relative; display: flex; align-items: center; padding: 0 65px 0 107px;
  border-bottom: 3px solid #f1f1f1;
  background: linear-gradient(to bottom, #f6f6f4, #fff 22px);
}
.lawd { display: flex; align-items: center; gap: 12px; margin-top: -7px; }
.lawd-word { font: 400 45px/1 Lato, sans-serif; color: #0d4480; letter-spacing: -1.5px; }
.sl-nav {
  margin-left: auto; display: flex; align-items: center; gap: 8px; margin-top: 7px;
  font: 700 14.5px/1 Lato, sans-serif; color: #264f7f; letter-spacing: .7px; white-space: nowrap;
}
.sl-burger { width: 32px; margin-left: 51px; display: flex; flex-direction: column; gap: 4px; margin-top: 2px; }
.sl-burger i { display: block; height: 5px; background: #0a4480; }
.sl-main { position: relative; flex: none; padding: 55px 0 0 468px; }
.sl-title { margin: 0; font: 600 38px/44px Inter, sans-serif; color: #0a3f7c; letter-spacing: 1.3px; white-space: nowrap; }
.sl-rule { width: 58px; height: 6px; margin-top: 12px; background: #b3cfad; }
.sl-lead { margin: 38px 0 0; font: 600 23px/31.5px Inter, sans-serif; color: #0f3f7d; white-space: nowrap; letter-spacing: .45px; }
.sl-body { margin: 24.75px 0 0; font: 400 15.5px/24.75px Inter, sans-serif; color: #222; white-space: nowrap; letter-spacing: .07px; }
.sl-lead + .sl-body { margin-top: 28px; }
.sl-strong { font-weight: 700; color: #111; }
.logos { position: relative; flex: none; display: flex; align-items: flex-start; gap: 69px; padding: 27px 0 0 196px; }
.lg-zanda { width: 201px; height: 115px; flex: none; position: relative; display: flex; flex-direction: column; }
.zanda-art { margin-top: 3px; margin-left: -1px; }
.zanda-name { position: absolute; left: 43px; top: 62px; font: 700 22px/1 "Liberation Sans", sans-serif; color: #1f1f1f; transform: scaleX(.68); transform-origin: left; white-space: nowrap; }
.zanda-sub { position: absolute; left: 4px; top: 98px; font: 400 12.2px/1 "Liberation Sans", sans-serif; color: #555; white-space: nowrap; letter-spacing: -.1px; }
.lg-af { width: 181px; flex: none; display: flex; flex-direction: column; align-items: flex-end; position: relative; }
.af-art { margin-right: 23px; }
.af-name { margin-top: 4px; align-self: flex-start; font: italic 400 21.5px/1 "Liberation Sans", sans-serif; color: #1c1c1c; white-space: nowrap; letter-spacing: -.4px; }
.lg-fb { margin-top: 2px; }
.lg-cef { margin-top: 3px; }
.fb-t { font: 900 42px "Liberation Sans", sans-serif; fill: #59186c; }
.cef-t { font: 700 18px "Liberation Sans", sans-serif; fill: #e6e6e6; }
.cef-s { font: 700 8.5px "Liberation Sans", sans-serif; fill: #d8d8d8; letter-spacing: 1.2px; }
.lg-hoa { width: 162px; margin-top: 24px; display: flex; flex-direction: column; color: #000; font-size: 35px; line-height: 33px; margin-left: 1px; white-space: nowrap; font-family: "Liberation Sans", sans-serif; }
.hoa-1 { font-style: italic; letter-spacing: -1.3px; }
.hoa-2 { letter-spacing: -.8px; }

/* caption */
.caption { position: absolute; left: 403px; top: 692px; display: flex; flex-direction: column; align-items: flex-start; }
.cap-line { height: 46px; padding: 0 10px; background: rgba(8,8,8,.75); color: #fff; font: 400 38.3px/46px Roboto, sans-serif; white-space: nowrap; }

/* brackets */
.brackets { position: absolute; left: 1855px; top: 766px; }

/* controls */
.controls { position: absolute; left: 0; right: 0; bottom: 0; height: 62px; color: #eee; }
.progress { position: absolute; left: 12px; top: 10px; width: 1877px; height: 3px; display: flex; }
.seg { height: 3px; flex: none; margin-right: 2px; background: rgba(255,255,255,.3); display: flex; }
.s1 { width: 772px; background: #f00; }
.s2 { width: 530px; }
.s3 { width: 298px; }
.s4 { width: 271px; margin-right: 0; }
.played { display: block; width: 384px; height: 3px; background: #f00; }
.buffered { display: block; width: 115px; height: 3px; background: #ddd; }
.ctl-row { position: absolute; left: 15px; right: 13px; top: 14px; height: 48px; display: flex; align-items: center; padding-bottom: 0; }
.ctl { width: 48px; height: 48px; display: flex; align-items: center; justify-content: center; flex: none; position: relative; }
.ctl-s { width: 46px; }
.ctl-play { width: 46px; margin-right: 0; }
.ctl-time { margin-left: 8px; font: 400 13px Roboto, sans-serif; color: #ddd; white-space: nowrap; }
.ctl-chap { margin-left: 9px; display: flex; align-items: center; gap: 6px; font: 400 13px Roboto, sans-serif; color: #eee; white-space: nowrap; }
.dot { font-size: 11px; }
.ctl-right { margin-left: auto; display: flex; padding-right: 0; }
.cc { width: 23px; height: 19px; border-radius: 3px; background: #fff; color: #555; font: 900 11px/19px "Liberation Sans", sans-serif; text-align: center; letter-spacing: .5px; }
.ctl:has(.cc)::after { content: ""; position: absolute; left: 12px; width: 24px; bottom: 9px; height: 3px; background: #f00; border-radius: 1px; }
.hd { position: absolute; right: 4px; top: 7px; height: 11px; padding: 0 2px; background: #f00; color: #fff; font: 700 8px/11px "Liberation Sans", sans-serif; }

/* taskbar */
.taskbar { height: 40px; flex: none; background: #004275; display: flex; align-items: stretch; color: #fff; font-size: 12px; white-space: nowrap; }
.startbtn { width: 55px; flex: none; display: flex; align-items: center; justify-content: center; padding-right: 7px; }
.tk { width: 152px; margin-right: 9px; flex: none; display: flex; align-items: center; gap: 5px; padding: 2px 0 0 5px; border-bottom: 2px solid #99ccf0; position: relative; }
.tki { width: 24px; height: 24px; flex: none; }
.tk-icon { width: 48px; flex: none; display: flex; align-items: center; justify-content: center; }
.tk-pig { margin-left: -4px; }
.tk-calc { margin-left: 1px; }
.tk-active { width: 160px; margin-right: 5px; margin-left: 2px; padding-left: 10px; gap: 4px; background: #005a9e; }
.tray { margin-left: auto; display: flex; align-items: center; padding-right: 12px; }
.netmeter { width: 87px; display: flex; flex-direction: column; gap: 1px; font-size: 12px; line-height: 13px; padding-right: 3px; color: #eaf2f8; }
.nm-row { display: flex; justify-content: space-between; }
.tc { width: 24px; display: flex; justify-content: center; align-items: center; flex: none; }
.tbox { width: 16px; height: 17px; background: linear-gradient(#7ec3f0, #3f97dc); color: #0a1a3a; font: 700 11px/17px "Liberation Sans", sans-serif; text-align: center; }
.tn { font-size: 11.5px; }
.tn-y { color: #f5d23a; }
.tn-l { color: #fdf28a; }
.tn-g { color: #3fe8a0; }
.tn-c { color: #3fe8e8; }
.clock { width: 64px; flex: none; display: flex; flex-direction: column; align-items: center; gap: 7px; line-height: 12px; font-size: 12px; }
.notif { width: 42px; flex: none; position: relative; display: flex; align-items: center; justify-content: center; padding-bottom: 4px; }
.notif-n { position: absolute; right: 7px; bottom: 6px; width: 16px; height: 16px; border: 1px solid #7ca7c7; border-radius: 50%; font-size: 11px; line-height: 14px; text-align: center; background: #004275; }
```
